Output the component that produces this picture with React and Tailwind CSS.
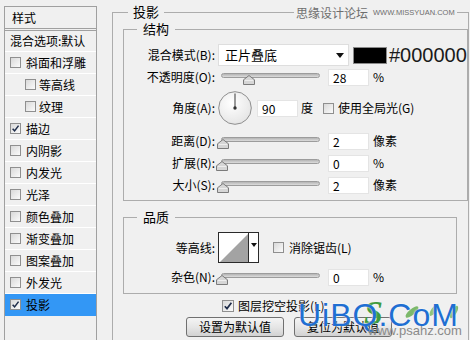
import React from 'react';

// Photoshop "图层样式 / 投影" dialog

const styleList = [
  { name: '斜面和浮雕' },
  { name: '等高线', sub: true },
  { name: '纹理', sub: true },
  { name: '描边', checked: true },
  { name: '内阴影' },
  { name: '内发光' },
  { name: '光泽' },
  { name: '颜色叠加' },
  { name: '渐变叠加' },
  { name: '图案叠加' },
  { name: '外发光' },
  { name: '投影', checked: true, active: true },
];

function Check({ checked, big }) {
  return (
    <span
      className={`relative inline-block shrink-0 border border-[#8f8f8f] bg-linear-to-br from-[#d9d9d9] to-[#fbfbfb] ${
        big ? 'w-[12px] h-[12px]' : 'w-[11px] h-[11px]'
      }`}
    >
      {checked && (
        <svg viewBox="0 0 10 10" className="absolute inset-0 w-full h-full">
          <path d="M1.8 5.2 L4 7.6 L8.4 1.8" fill="none" stroke="#1f2d4a" strokeWidth="1.7" />
        </svg>
      )}
    </span>
  );
}

function Slider({ pct }) {
  return (
    <div className="relative w-[104px] h-[18px] shrink-0">
      <div className="absolute left-[3px] right-[2px] top-[5px] h-[5px] rounded-full border border-[#9c9c9c] bg-linear-to-b from-[#b4b4b4] to-[#dcdcdc]" />
      <svg
        className="absolute top-[7px] w-[12px] h-[10px]"
        style={{ left: 4 + pct * 98 - 6 }}
        viewBox="0 0 12 10"
      >
        <polygon
          points="6,0.5 11.5,4.8 11.5,9.5 0.5,9.5 0.5,4.8"
          fill="#d6d6d6"
          stroke="#7b7b7b"
          strokeWidth="1"
        />
        <line x1="2" y1="5.5" x2="10" y2="5.5" stroke="#eeeeee" strokeWidth="1" />
      </svg>
    </div>
  );
}

function Field({ value }) {
  return (
    <div className="w-[41px] h-[17px] shrink-0 bg-white border border-[#e4e4e4] pl-[4px] text-[12px] leading-[15px]">
      {value}
    </div>
  );
}

function Label({ children }) {
  return <div className="w-[91px] shrink-0 text-right whitespace-nowrap">{children}</div>;
}

function SliderRow({ label, pct, value, unit, className }) {
  return (
    <div className={`h-[18px] flex items-center ${className}`}>
      <Label>{label}</Label>
      <div className="ml-[3px]">
        <Slider pct={pct} />
      </div>
      <div className="ml-[6px]">
        <Field value={value} />
      </div>
      <span className="ml-[4px] whitespace-nowrap">{unit}</span>
    </div>
  );
}

function Button({ children, className }) {
  return (
    <button
      className={`w-[98px] h-[20px] rounded-[3px] border border-[#707070] bg-linear-to-b from-[#f4f4f4] via-[#e6e6e6] to-[#d2d2d2] text-[12px] leading-[18px] text-black ${className}`}
    >
      {children}
    </button>
  );
}

export default function App() {
  return (
    <div className="relative w-[470px] h-[340px] overflow-hidden bg-[#f0f0f0] text-black text-[12px] leading-[16px] font-['Noto_Sans_CJK_SC','Noto_Sans',sans-serif] flex items-start">
      {/* left style list */}
      <aside className="ml-[4px] mt-[6px] w-[93px] h-[400px] shrink-0 border border-[#a0a0a0] bg-[#f0f0f0]">
        <div className="h-[22px] pl-[7px] flex items-center border-b border-[#a0a0a0]">样式</div>
        <div className="mt-[1px] h-[22px] pl-[5px] flex items-center border-t border-[#a0a0a0] border-b border-b-white whitespace-nowrap">
          混合选项:默认
        </div>
        {styleList.map((s) => (
          <div
            key={s.name}
            className={`h-[22px] flex items-center border-b whitespace-nowrap ${
              s.active ? 'bg-[#3397f5] border-[#3397f5]' : 'border-white'
            } ${s.sub ? 'pl-[20px]' : 'pl-[5px]'}`}
          >
            <Check checked={s.checked} />
            <span className={s.sub ? 'ml-[3px]' : 'ml-[5px]'}>{s.name}</span>
          </div>
        ))}
      </aside>

      {/* 投影 */}
      <fieldset className="ml-[15px] mt-[4px] w-[354px] h-[400px] shrink-0 border border-[#acacac] pl-[10px]">
        <legend className="ml-[5px] px-[5px] text-[13px] leading-[16px]">投影</legend>

        <fieldset className="mt-[1px] w-[334px] border border-[#acacac] pt-[7px] pb-[6px]">
          <legend className="ml-[13px] px-[6px] text-[13px] leading-[16px]">结构</legend>

          <div className="h-[22px] flex items-center">
            <Label>混合模式(B):</Label>
            <div className="ml-[3px] w-[131px] h-[22px] shrink-0 bg-white border border-[#dedede] flex items-center pl-[6px] pr-[4px]">
              <span className="flex-1 text-[13px]">正片叠底</span>
              <svg width="8" height="5" viewBox="0 0 8 5">
                <polygon points="0,0 8,0 4,5" fill="#111" />
              </svg>
            </div>
            <div className="ml-[4px] w-[34px] h-[17px] shrink-0 bg-black border border-[#8a8a8a]" />
            <span className="ml-[2px] whitespace-nowrap text-[20px] leading-none text-[#1a1a1a] font-['Liberation_Sans',sans-serif]">
              #000000
            </span>
          </div>

          <SliderRow className="mt-[2px]" label="不透明度(O):" pct={0.28} value="28" unit="%" />

          <div className="mt-[4px] h-[36px] flex items-center">
            <Label>角度(A):</Label>
            <svg className="ml-[3px] shrink-0" width="34" height="34" viewBox="0 0 34 34">
              <defs>
                <radialGradient id="dialFill" cx="40%" cy="35%" r="75%">
                  <stop offset="0" stopColor="#ffffff" />
                  <stop offset="1" stopColor="#e2e2e2" />
                </radialGradient>
              </defs>
              <circle cx="17" cy="17" r="16.3" fill="url(#dialFill)" stroke="#8e8e8e" strokeWidth="1" />
              <line x1="17" y1="17" x2="17" y2="2.5" stroke="#4a4a4a" strokeWidth="1.1" />
              <circle cx="17" cy="17" r="1.7" fill="#333" />
            </svg>
            <div className="ml-[5px]">
              <Field value="90" />
            </div>
            <span className="ml-[3px]">度</span>
            <span className="ml-[10px] flex items-center">
              <Check />
            </span>
            <span className="ml-[4px] whitespace-nowrap">使用全局光(G)</span>
          </div>

          <SliderRow className="mt-[6px]" label="距离(D):" pct={0.015} value="2" unit="像素" />
          <SliderRow className="mt-[4px]" label="扩展(R):" pct={0} value="0" unit="%" />
          <SliderRow className="mt-[4px]" label="大小(S):" pct={0.015} value="2" unit="像素" />
        </fieldset>

        <fieldset className="mt-[8px] w-[334px] border border-[#acacac] pt-[7px] pb-[7px]">
          <legend className="ml-[13px] px-[6px] text-[13px] leading-[16px]">品质</legend>

          <div className="h-[31px] flex items-center">
            <Label>等高线:</Label>
            <div className="ml-[3px] w-[41px] h-[31px] shrink-0 border border-[#2a2a2a] bg-white flex">
              <svg width="29" height="29" viewBox="0 0 29 29" className="shrink-0">
                <polygon points="1,29 29,1 29,29" fill="#a3a3a3" />
              </svg>
              <div className="flex-1 border-l border-[#2a2a2a] flex items-start justify-center pt-[10px]">
                <svg width="6" height="4" viewBox="0 0 6 4">
                  <polygon points="0,0 6,0 3,4" fill="#111" />
                </svg>
              </div>
            </div>
            <span className="ml-[14px] flex items-center">
              <Check />
            </span>
            <span className="ml-[5px] whitespace-nowrap">消除锯齿(L)</span>
          </div>

          <SliderRow className="mt-[5px]" label="杂色(N):" pct={0} value="0" unit="%" />
        </fieldset>

        <div className="mt-[4px] h-[16px] pl-[99px] flex items-center">
          <Check checked big />
          <span className="ml-[4px] whitespace-nowrap">图层挖空投影(L)</span>
        </div>

        <div className="mt-[3px] pl-[63px] flex">
          <Button>设置为默认值</Button>
          <Button className="ml-[10px]">复位为默认值</Button>
        </div>
      </fieldset>

      {/* top watermark */}
      <div className="absolute top-[5px] left-[294px] px-[2px] bg-[#f0f0f0] flex items-center whitespace-nowrap text-[#6e6e6e]">
        <span className="text-[12px] leading-[16px]">思缘设计论坛</span>
        <span className="ml-[5px] text-[7.5px] font-['Liberation_Sans',sans-serif]">
          WWW.MISSYUAN.COM
        </span>
      </div>

      {/* bottom watermark */}
      <div className="absolute top-[298px] left-[298px] w-[170px] h-[42px] pointer-events-none">
        <span className="absolute left-[66px] top-[-2px] text-[34px] leading-[34px] italic font-bold text-[#3f9b3c] font-['Liberation_Serif',serif]">
          S
        </span>
        <svg className="absolute left-[100px] top-[2px]" width="66" height="24" viewBox="0 0 66 24">
          <ellipse cx="14" cy="12" rx="8" ry="3" transform="rotate(-40 14 12)" fill="#7cb86a" />
          <ellipse cx="36" cy="10" rx="7" ry="2.6" transform="rotate(-55 36 10)" fill="#8ec47a" />
          <ellipse cx="56" cy="12" rx="7" ry="2.6" transform="rotate(-60 56 12)" fill="#7cb86a" />
        </svg>
        <span className="absolute left-0 top-[1px] text-[32px] leading-[32px] tracking-[1px] text-[#1f6fd2] font-['Liberation_Sans',sans-serif] [text-shadow:0_0_2px_#ffffff]">
          UiBQ.CoM
        </span>
        <span className="absolute left-[70px] top-[26px] text-[13px] leading-[14px] text-[#8a8a8a] font-['Liberation_Sans',sans-serif]">
          www.psahz.com
        </span>
      </div>
    </div>
  );
}
